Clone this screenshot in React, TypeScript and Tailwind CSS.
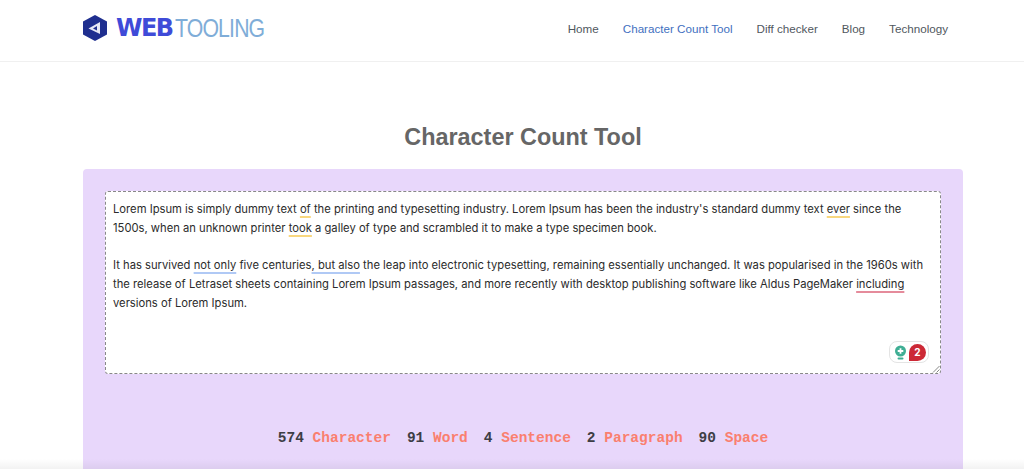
const navLinks = ["Home", "Character Count Tool", "Diff checker", "Blog", "Technology"];

const stats = [
  { value: "574", label: "Character" },
  { value: "91", label: "Word" },
  { value: "4", label: "Sentence" },
  { value: "2", label: "Paragraph" },
  { value: "90", label: "Space" },
];

function Mark({ color, children }: { color: string; children: React.ReactNode }) {
  return <span className={`underline decoration-2 underline-offset-[3px] ${color}`}>{children}</span>;
}

function Logo() {
  return (
    <div className="flex items-center -mt-[5px]">
      <svg width="26" height="28" viewBox="0 0 26 28" className="mr-[8px]">
        <path d="M13 1 L25 7.5 V20.5 L13 27 L1 20.5 V7.5 Z" fill="#1f2f8f" />
        <path d="M18 8 V20 L6.5 14.5 Z" fill="#e6e8f5" />
        <path d="M15 12 V16.5 L11 14.5 Z" fill="#1f2f8f" />
      </svg>
      <span className="font-['DejaVu_Sans'] font-bold text-[24px] tracking-[-1.5px] text-[#3f4bd8] leading-none">WEB</span>
      <span className="font-['Liberation_Sans'] text-[25px] tracking-[-1px] text-[#7fadd8] leading-none ml-[2px] scale-x-[0.85] origin-left">TOOLING</span>
    </div>
  );
}

export default function App() {
  return (
    <div className="relative h-[469px] overflow-hidden bg-white font-['Inter',sans-serif]">
      <header className="h-[62px] border-b border-[#f0f0f0] pl-[82px] pr-[76px] flex items-center justify-between">
        <Logo />
        <nav className="flex gap-[24px] text-[11.65px] font-['Liberation_Sans'] text-[#50575e] -mt-[3px]">
          {navLinks.map((link) => (
            <a key={link} className={link === "Character Count Tool" ? "text-[#3f6fc0]" : ""}>
              {link}
            </a>
          ))}
        </nav>
      </header>

      <div className="mx-[83px] w-[880px]">
        <h1 className="mt-[60px] text-center font-['Liberation_Sans'] font-bold text-[23.4px] leading-[30px] text-[#666666]">
          Character Count Tool
        </h1>

        <main className="mt-[17px] h-[320px] rounded-[4px] bg-[#e8d7fb] pt-[22px] px-[22px]">
          <div className="relative h-[183px] bg-white rounded-[3px] border border-dashed border-[#888888] px-[7px] pt-[8px] text-[11.22px] leading-[18.75px] text-[#2b2b2b]">
            <p>
              Lorem Ipsum is simply dummy text <Mark color="decoration-[#f8d77f]">of</Mark> the printing and typesetting industry. Lorem Ipsum has been the industry's standard dummy text <Mark color="decoration-[#f8d77f]">ever</Mark> since the 1500s, when an unknown printer <Mark color="decoration-[#f8d77f]">took</Mark> a galley of type and scrambled it to make a type specimen book.
            </p>
            <p className="mt-[18.75px]">
              It has survived <Mark color="decoration-[#b0c9f5]">not only</Mark> five centuries<Mark color="decoration-[#b0c9f5]">, but also</Mark> the leap into electronic typesetting, remaining essentially unchanged. It was popularised in the 1960s with the release of Letraset sheets containing Lorem Ipsum passages, and more recently with desktop publishing software like Aldus PageMaker <Mark color="decoration-[#e58b9b]">including</Mark> versions of Lorem Ipsum.
            </p>

            <div className="absolute right-[11px] bottom-[10px] h-[22px] w-[40px] rounded-[8px] border border-[#e4e4e4] bg-white flex items-center justify-between pl-[4px] pr-[2px]">
              <svg width="13" height="15" viewBox="0 0 13 15">
                <circle cx="6.5" cy="6" r="5.5" fill="#3fae94" />
                <path d="M6.5 3.2 V8.8 M3.7 6 H9.3" stroke="#fff" strokeWidth="1.8" />
                <rect x="3.5" y="12.5" width="6" height="2" rx="1" fill="#3fae94" />
              </svg>
              <span className="w-[17px] h-[17px] rounded-full rounded-bl-[3px] bg-[#cc2936] text-white text-[10px] font-bold flex items-center justify-center">
                2
              </span>
            </div>

            <svg width="8" height="8" viewBox="0 0 8 8" className="absolute right-0 bottom-0">
              <path d="M7.5 1 L1 7.5 M7.5 4.5 L4.5 7.5" stroke="#888888" strokeWidth="1" />
            </svg>
          </div>

          <div className="mt-[54px] flex justify-center gap-[16px] font-['Liberation_Mono'] font-bold text-[14.5px] leading-[20px]">
            {stats.map((stat) => (
              <span key={stat.label}>
                <span className="text-[#3d3d45]">{stat.value}</span>{" "}
                <span className="text-[#fa7f6f]">{stat.label}</span>
              </span>
            ))}
          </div>
        </main>
      </div>

      <div className="absolute inset-x-0 bottom-0 h-[10px] bg-gradient-to-b from-transparent to-[#0000000d]" />
    </div>
  );
}
